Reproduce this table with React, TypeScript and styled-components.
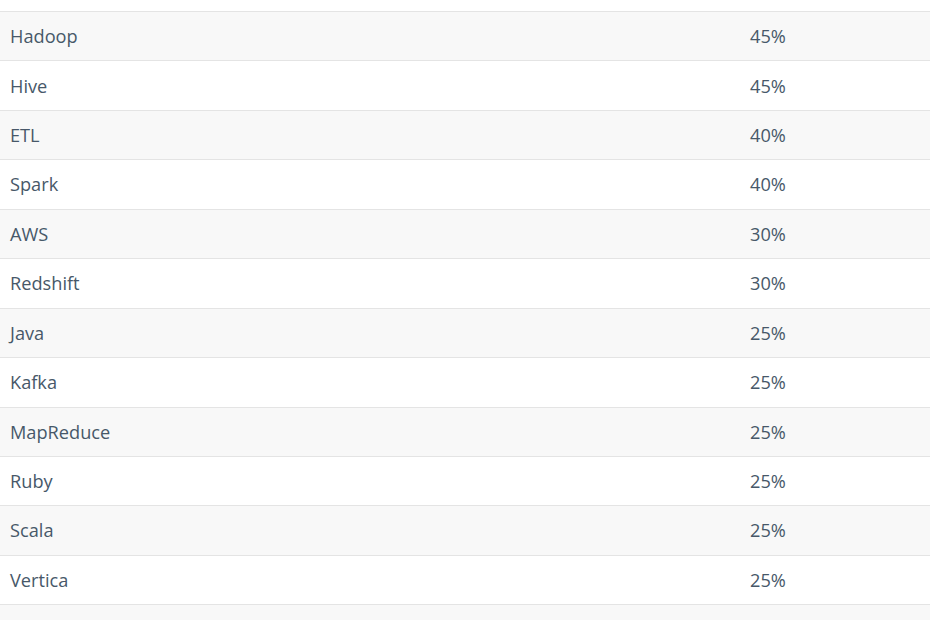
import * as React from "react";
import styled, { createGlobalStyle } from "styled-components";

const GlobalStyle = createGlobalStyle`
  html, body {
    margin: 0;
    padding: 0;
    background: #ffffff;
  }
  body {
    font-family: "Open Sans", "Liberation Sans", sans-serif;
    overflow: hidden;
  }
`;

const TableContainer = styled.div`
  padding-top: 11px;
  width: 930px;
  height: 620px;
  box-sizing: border-box;
  overflow: hidden;
`;

const Row = styled.div<{ $striped: boolean }>`
  display: grid;
  grid-template-columns: 740px 1fr;
  align-items: center;
  box-sizing: border-box;
  height: 49.45px;
  padding-left: 10px;
  border-top: 1.2px solid #e4e4e4;
  background-color: ${(props) => (props.$striped ? "#f8f8f8" : "#ffffff")};
  color: #475869;
  font-size: 18.2px;
  line-height: 1;
`;

const Cell = styled.div`
  white-space: nowrap;
`;

const skills: [string, string][] = [
  ["Hadoop", "45%"],
  ["Hive", "45%"],
  ["ETL", "40%"],
  ["Spark", "40%"],
  ["AWS", "30%"],
  ["Redshift", "30%"],
  ["Java", "25%"],
  ["Kafka", "25%"],
  ["MapReduce", "25%"],
  ["Ruby", "25%"],
  ["Scala", "25%"],
  ["Vertica", "25%"],
  ["", ""],
];

export default function App() {
  return (
    <>
      <GlobalStyle />
      <TableContainer>
        {skills.map(([name, share], i) => (
          <Row key={i} $striped={i % 2 === 0}>
            <Cell>{name}</Cell>
            <Cell>{share}</Cell>
          </Row>
        ))}
      </TableContainer>
    </>
  );
}
